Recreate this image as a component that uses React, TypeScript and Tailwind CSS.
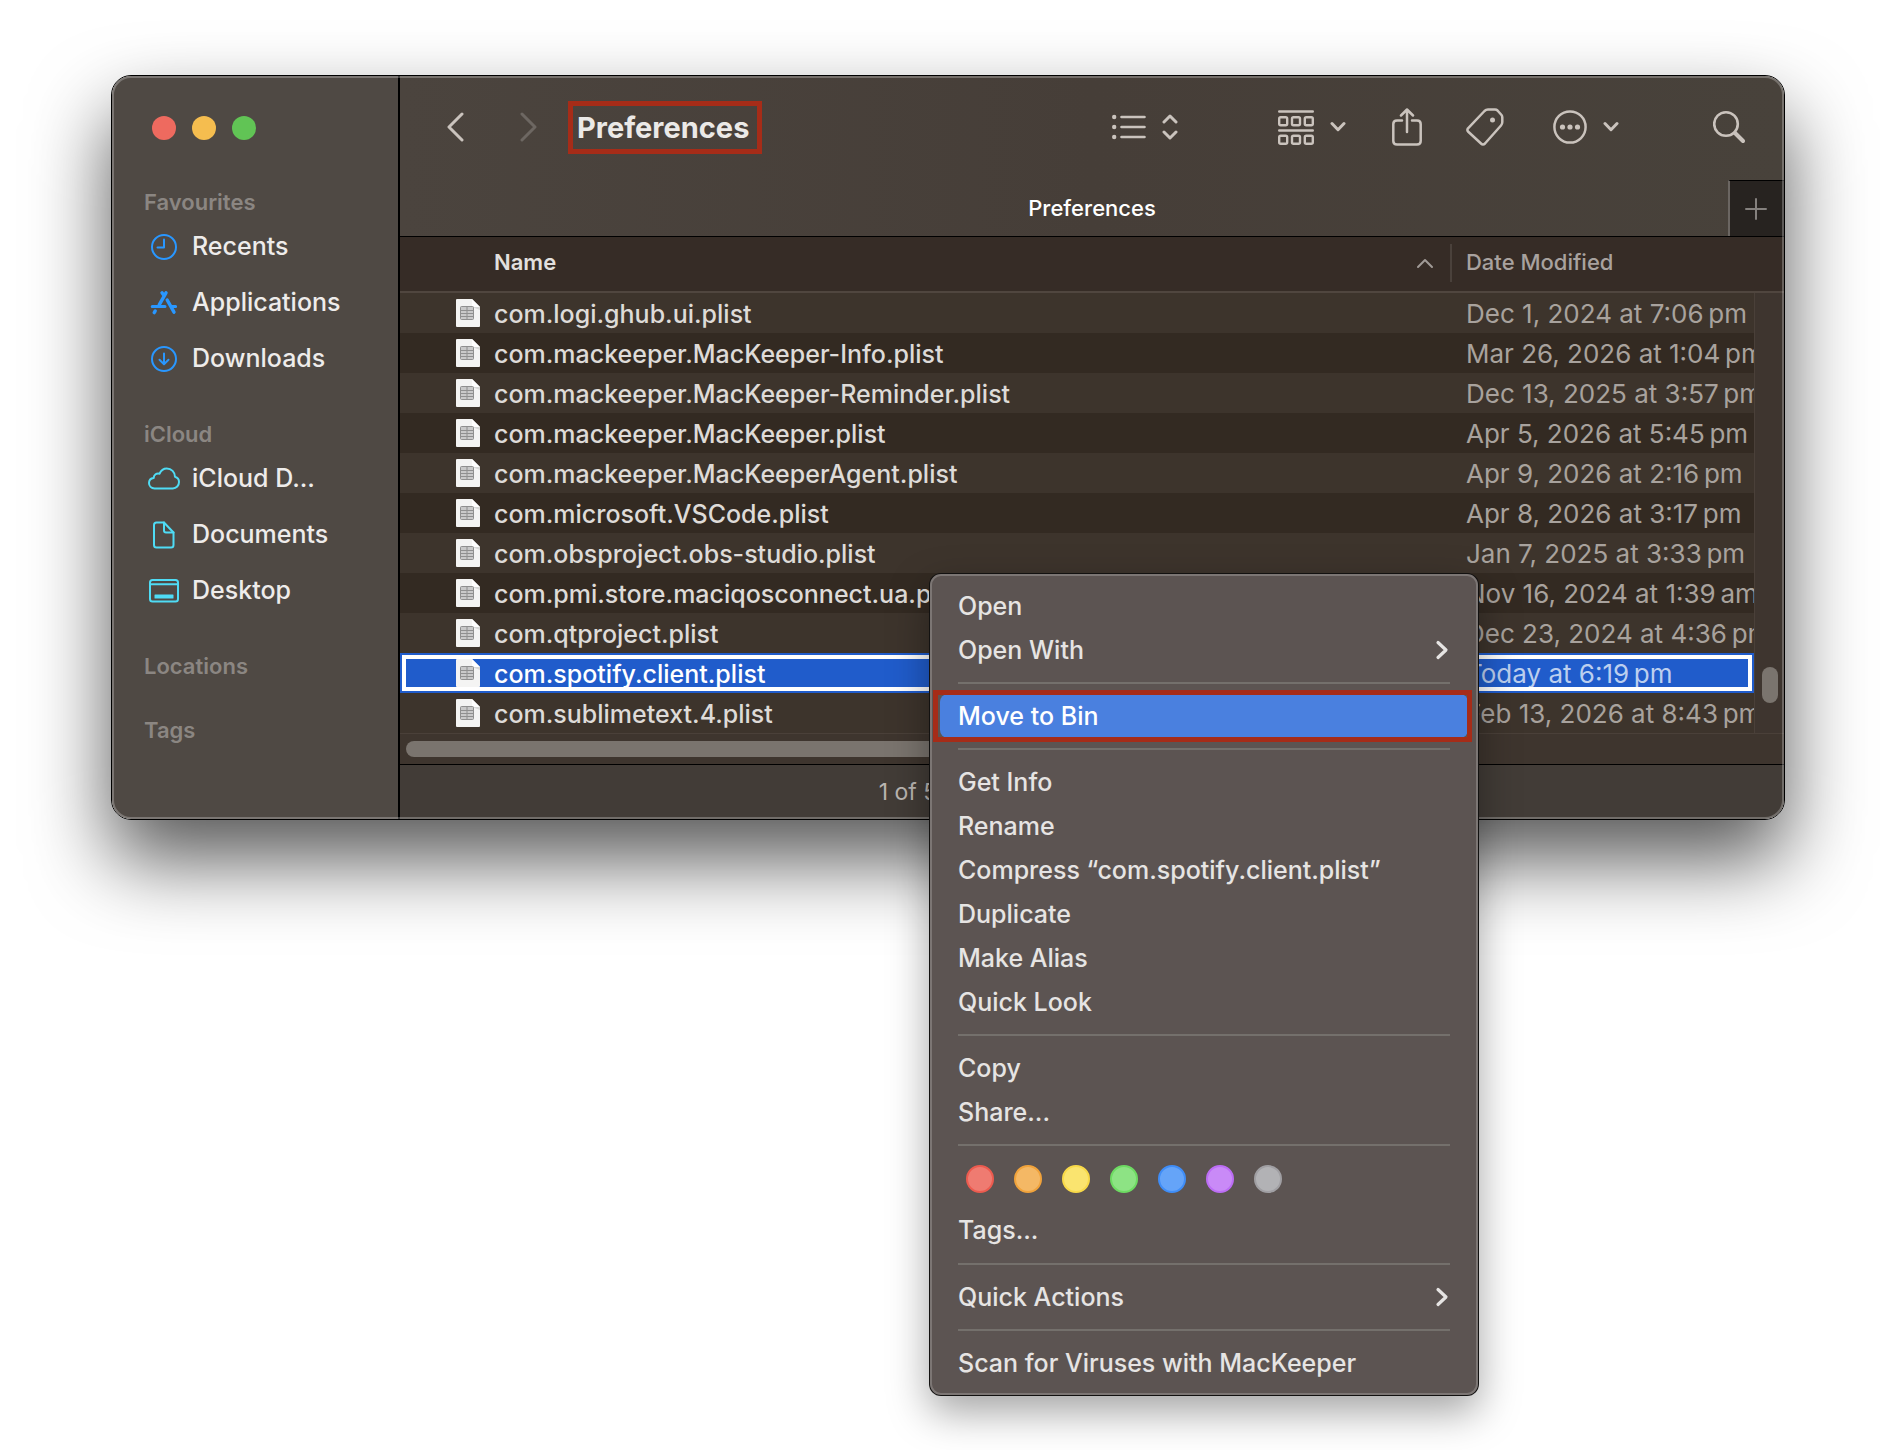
import React from "react";

const files = [
  { name: "com.logi.ghub.ui.plist", date: "Dec 1, 2024 at 7:06\u202fpm" },
  { name: "com.mackeeper.MacKeeper-Info.plist", date: "Mar 26, 2026 at 1:04\u202fpm" },
  { name: "com.mackeeper.MacKeeper-Reminder.plist", date: "Dec 13, 2025 at 3:57\u202fpm" },
  { name: "com.mackeeper.MacKeeper.plist", date: "Apr 5, 2026 at 5:45\u202fpm" },
  { name: "com.mackeeper.MacKeeperAgent.plist", date: "Apr 9, 2026 at 2:16\u202fpm" },
  { name: "com.microsoft.VSCode.plist", date: "Apr 8, 2026 at 3:17\u202fpm" },
  { name: "com.obsproject.obs-studio.plist", date: "Jan 7, 2025 at 3:33\u202fpm" },
  { name: "com.pmi.store.maciqosconnect.ua.plist", date: "Nov 16, 2024 at 1:39\u202fam" },
  { name: "com.qtproject.plist", date: "Dec 23, 2024 at 4:36\u202fpm" },
  { name: "com.spotify.client.plist", date: "Today at 6:19\u202fpm", selected: true },
  { name: "com.sublimetext.4.plist", date: "Feb 13, 2026 at 8:43\u202fpm" },
];

const stroke = {
  fill: "none",
  stroke: "currentColor",
  strokeLinecap: "round",
  strokeLinejoin: "round",
} as const;

function ClockIcon() {
  return (
    <svg width="32" height="32" viewBox="0 0 32 32" {...stroke} strokeWidth="2">
      <circle cx="16" cy="16" r="12" />
      <path d="M16 8.5V16.5H9.5" />
    </svg>
  );
}

function AppsIcon() {
  return (
    <svg width="32" height="32" viewBox="0 0 32 32" {...stroke} strokeWidth="3.4">
      <path d="M18 5.8L11.2 17.8M14 5.8L16 8.6M19.2 13L26 25.2" />
      <path d="M4.2 19.6H17M23.4 19.6H27.6" strokeWidth="3" />
      <path d="M7.2 24L6.2 25.6" />
    </svg>
  );
}

function DownloadIcon() {
  return (
    <svg width="32" height="32" viewBox="0 0 32 32" {...stroke} strokeWidth="2">
      <circle cx="16" cy="16" r="12" />
      <path d="M16 10.5V21M11.5 16.8L16 21.2L20.5 16.8" />
    </svg>
  );
}

function CloudIcon() {
  return (
    <svg width="32" height="32" viewBox="0 0 32 32" {...stroke} strokeWidth="2">
      <path d="M6.6 25.4C3.3 25.4 1 23 1 20.1c0-2.8 2-4.9 4.7-5.2 0-3.2 3-5.2 5.9-4.2C13 7.3 15.6 5.5 18.8 5.5c4.6 0 8.1 3.6 8.2 8.2 2.4 .7 4 2.9 4 5.4 0 3.5-2.6 6.3-6.2 6.3z" />
    </svg>
  );
}

function DocIcon() {
  return (
    <svg width="32" height="32" viewBox="0 0 32 32" {...stroke} strokeWidth="2">
      <path d="M8.5 3.5H16L25.5 13.5V26Q25.5 28.5 23 28.5H8.5Q6 28.5 6 26V6Q6 3.5 8.5 3.5z" />
      <path d="M16 3.5V11.5Q16 13.5 18 13.5H25.5" />
    </svg>
  );
}

function DesktopIcon() {
  return (
    <svg width="32" height="32" viewBox="0 0 32 32" {...stroke} strokeWidth="2">
      <rect x="2" y="5" width="28" height="21.5" rx="2.5" />
      <path d="M2 9.3H30" />
      <rect x="6.5" y="19.5" width="19" height="4" rx="0.5" fill="currentColor" stroke="none" />
    </svg>
  );
}

function PlistIcon() {
  return (
    <svg className="shrink-0" width="24" height="30" viewBox="0 0 24 30">
      <path d="M1 1H16L24 9V28Q24 29 23 29H1Q0 29 0 28V2Q0 1 1 1z" fill="#f4f4f3" />
      <path d="M16 1L24 9H16z" fill="#ffffff" />
      <path d="M16 9H24V12z" fill="#d9d9d8" />
      <rect x="4.5" y="8.5" width="13" height="13" rx="1" fill="#c9c9c9" stroke="#8f8f8f" />
      <path d="M11 8.5V21.5M5 12.5H17M5 15.5H17M5 18.5H17" stroke="#8f8f8f" />
    </svg>
  );
}

function ChevronDown() {
  return (
    <svg width="16" height="12" viewBox="0 0 16 12" {...stroke} strokeWidth="3">
      <path d="M2 2.5L8 8.7L14 2.5" />
    </svg>
  );
}

const places = [
  {
    heading: "Favourites",
    color: "text-[#2997ff]",
    items: [
      { label: "Recents", icon: ClockIcon },
      { label: "Applications", icon: AppsIcon },
      { label: "Downloads", icon: DownloadIcon },
    ],
  },
  {
    heading: "iCloud",
    color: "text-[#4fdcf5]",
    items: [
      { label: "iCloud D...", icon: CloudIcon },
      { label: "Documents", icon: DocIcon },
      { label: "Desktop", icon: DesktopIcon },
    ],
  },
];

function Sidebar() {
  return (
    <nav className="w-[288px] shrink-0 border-r-2 border-black bg-[#4f4944]">
      <div className="flex gap-4 pt-10 pl-10">
        <button aria-label="Close" className="size-6 rounded-full bg-[#ee6a5f]" />
        <button aria-label="Minimise" className="size-6 rounded-full bg-[#f5bd4f]" />
        <button aria-label="Zoom" className="size-6 rounded-full bg-[#61c455]" />
      </div>
      <div className="pt-12 pl-8">
        {places.map(({ heading, color, items }) => (
          <section key={heading} className="mb-[33px]">
            <h2 className="h-7 text-[22px] leading-7 font-semibold text-[#8b8682]">{heading}</h2>
            <ul className="pt-[3px]">
              {items.map(({ label, icon: Icon }) => (
                <li key={label}>
                  <a href="#" className="flex h-14 items-center gap-3 pl-1 text-[25px] font-medium text-[#eeeceb]">
                    <span className={color}>
                      <Icon />
                    </span>
                    {label}
                  </a>
                </li>
              ))}
            </ul>
          </section>
        ))}
        <h2 className="mb-9 h-7 text-[22px] leading-7 font-semibold text-[#8b8682]">Locations</h2>
        <h2 className="h-7 text-[22px] leading-7 font-semibold text-[#8b8682]">Tags</h2>
      </div>
    </nav>
  );
}

function Toolbar() {
  return (
    <header className="flex h-[104px] items-center pr-[39px] pb-0.5 pl-[46px] text-[#cac3bd]">
      <button aria-label="Back" className="mr-14">
        <svg width="18" height="30" viewBox="0 0 18 30" {...stroke} strokeWidth="3">
          <path d="M16 2L3 15L16 28" />
        </svg>
      </button>
      <button aria-label="Forward" className="text-[#6d6762]">
        <svg width="18" height="30" viewBox="0 0 18 30" {...stroke} strokeWidth="3">
          <path d="M2 2L15 15L2 28" />
        </svg>
      </button>
      <h1 className="ml-[30px] border-[5px] border-[#a62c18] py-1 pr-2 pl-1 text-[29px] leading-[35px] font-bold text-[#ebe9e7]">
        Preferences
      </h1>
      <button aria-label="View as list" className="ml-auto flex items-center gap-4">
        <svg width="34" height="28" viewBox="0 0 34 28" {...stroke} strokeWidth="2.6">
          <path d="M9.5 4H32.5M9.5 14H32.5M9.5 24H32.5" />
          <g fill="currentColor" stroke="none">
            <circle cx="2.2" cy="4" r="2.2" />
            <circle cx="2.2" cy="14" r="2.2" />
            <circle cx="2.2" cy="24" r="2.2" />
          </g>
        </svg>
        <svg width="16" height="28" viewBox="0 0 16 28" {...stroke} strokeWidth="3">
          <path d="M2 9L8 3L14 9M2 19L8 25L14 19" />
        </svg>
      </button>
      <button aria-label="Group by" className="ml-[100px] flex items-center gap-4">
        <svg width="36" height="36" viewBox="0 0 36 36" {...stroke} strokeWidth="2.4">
          <path d="M1.2 2.5H34.8M1.2 21.5H34.8" />
          <rect x="1.2" y="8.2" width="8" height="8" rx="1.5" />
          <rect x="14" y="8.2" width="8" height="8" rx="1.5" />
          <rect x="26.8" y="8.2" width="8" height="8" rx="1.5" />
          <rect x="1.2" y="26.8" width="8" height="8" rx="1.5" />
          <rect x="14" y="26.8" width="8" height="8" rx="1.5" />
          <rect x="26.8" y="26.8" width="8" height="8" rx="1.5" />
        </svg>
        <ChevronDown />
      </button>
      <button aria-label="Share" className="ml-[46px]">
        <svg width="30" height="38" viewBox="0 0 30 38" {...stroke} strokeWidth="2.5">
          <path d="M10 12.5H5Q1.3 12.5 1.3 16V33Q1.3 36.5 5 36.5H25Q28.7 36.5 28.7 33V16Q28.7 12.5 25 12.5H20" />
          <path d="M15 24V1.5M9 7.5L15 1.5L21 7.5" />
        </svg>
      </button>
      <button aria-label="Edit tags" className="ml-11">
        <svg width="38" height="38" viewBox="0 0 38 38" {...stroke} strokeWidth="2.5">
          <path d="M22 1.5H29Q30.5 1.5 31.5 2.5L35.5 7Q36.3 8 36.3 9.5V14Q36.3 16 35 17.5L19 35.5Q17 37.5 15 35.5L2 23.5Q.8 22 2 20.3L18.5 3Q20 1.5 22 1.5z" />
          <circle cx="26.5" cy="12" r="2.5" fill="currentColor" stroke="none" />
        </svg>
      </button>
      <button aria-label="More actions" className="ml-[49px] flex items-center gap-4">
        <svg width="34" height="34" viewBox="0 0 34 34" {...stroke} strokeWidth="2.5">
          <circle cx="17" cy="17" r="15.6" />
          <g fill="currentColor" stroke="none">
            <circle cx="9.5" cy="17" r="2.6" />
            <circle cx="17" cy="17" r="2.6" />
            <circle cx="24.5" cy="17" r="2.6" />
          </g>
        </svg>
        <ChevronDown />
      </button>
      <button aria-label="Search" className="ml-[94px]">
        <svg width="32" height="34" viewBox="0 0 32 34" {...stroke} strokeWidth="2.6">
          <circle cx="13" cy="14" r="11.8" />
          <path d="M22 23L30 31" strokeWidth="4" />
        </svg>
      </button>
    </header>
  );
}

function TabBar() {
  return (
    <div className="grid h-[57px] grid-cols-[56px_1fr_56px] border-b border-black">
      <button className="col-start-2 text-[22px] font-medium text-white">Preferences</button>
      <button
        aria-label="New tab"
        className="flex items-center justify-center border-t border-l-2 border-t-black border-l-[#6b6662] bg-[#272320] pr-0.5 text-[#85817e]"
      >
        <svg width="22" height="22" viewBox="0 0 22 22" {...stroke} strokeWidth="2">
          <path d="M11 1V21M1 11H21" />
        </svg>
      </button>
    </div>
  );
}

function FileTable() {
  return (
    <table className="w-full table-fixed border-separate border-spacing-0 text-left">
      <colgroup>
        <col />
        <col className="w-[302px]" />
        <col className="w-[30px]" />
      </colgroup>
      <thead>
        <tr className="bg-[#362c26] text-[22px]">
          <th className="h-14 border-b-2 border-[#50463f] p-0 pb-0.5 pl-[94px] font-semibold text-[#e3e0de]">
            <div className="flex items-center justify-between">
              <span className="pb-0.5">Name</span>
              <span className="flex items-center gap-4 text-[#a09a96]">
                <svg width="18" height="12" viewBox="0 0 18 12" {...stroke} strokeWidth="2">
                  <path d="M2 10L9 3L16 10" />
                </svg>
                <span className="h-[38px] w-0 border-r-2 border-[#4a413b]" />
              </span>
            </div>
          </th>
          <th colSpan={2} className="border-b-2 border-[#50463f] p-0 pb-1 pl-[14px] font-medium text-[#a8a29f]">
            Date Modified
          </th>
        </tr>
      </thead>
      <tbody>
        {files.map(({ name, date, selected }, i) => (
          <tr
            key={name}
            className={
              selected
                ? "bg-[#205ccb] text-white"
                : i % 2
                  ? "bg-[#332a22] text-[#dedbd8]"
                  : "bg-[#3d342c] text-[#dedbd8]"
            }
          >
            <td className="relative h-10 p-0 pl-14 text-[25px] leading-9 font-medium">
              {selected && <div className="absolute inset-y-0.5 right-0 left-0.5 border-4 border-r-0 border-white" />}
              <div className="relative flex items-center gap-[14px] whitespace-nowrap">
                <PlistIcon />
                <span className="pt-0.5">{name}</span>
              </div>
            </td>
            <td
              className={
                selected
                  ? "relative h-10 overflow-hidden p-0 pt-0.5 pl-[14px] text-[26px] leading-9 whitespace-nowrap text-[#bccfef]"
                  : "relative h-10 overflow-hidden p-0 pt-0.5 pl-[14px] text-[26px] leading-9 whitespace-nowrap text-[#a8a29d]"
              }
            >
              {selected && <div className="absolute inset-y-0.5 right-0.5 left-0 border-4 border-l-0 border-white" />}
              {date}
            </td>
            {i === 0 && (
              <td rowSpan={files.length} className="border-l border-[#4a4039] bg-[#3e352f] p-0 pb-[30px] pl-[7px] align-bottom">
                <div className="h-9 w-4 rounded-full bg-[#7a746e]" />
              </td>
            )}
          </tr>
        ))}
      </tbody>
    </table>
  );
}

function FinderWindow() {
  return (
    <main className="relative flex overflow-hidden rounded-[20px] border border-black">
      <Sidebar />
      <section className="flex min-w-0 flex-1 flex-col">
        <div className="bg-linear-to-r from-[#4b443e] via-[#463e38] to-[#48423b]">
          <Toolbar />
          <TabBar />
        </div>
        <FileTable />
        <div className="border-t border-b border-t-[#4a4039] border-b-black bg-[#3e352e] py-[7px] pl-1.5">
          <div className="h-4 w-3/4 rounded-full bg-[#7a746e]" />
        </div>
        <footer className="bg-[#423c37] py-3 text-center text-[23px] leading-[30px] text-[#bab5b1]">
          1 of 583 selected, 1,132.45 GB available
        </footer>
      </section>
      <div className="pointer-events-none absolute inset-0 rounded-[19px] border-2 border-white/25" />
    </main>
  );
}

function Item({ children, submenu, highlighted }: { children: React.ReactNode; submenu?: boolean; highlighted?: boolean }) {
  return (
    <button
      role="menuitem"
      className={
        highlighted
          ? "relative flex h-11 w-full items-center justify-between rounded-lg bg-[#4a80df] px-[18px] text-left text-white"
          : "relative flex h-11 w-full items-center justify-between px-[18px] text-left"
      }
    >
      <span className="pt-0.5">{children}</span>
      {submenu && (
        <svg width="16" height="20" viewBox="0 0 16 20" {...stroke} strokeWidth="3.2">
          <path d="M4 2.5L12 10L4 17.5" />
        </svg>
      )}
      {highlighted && <span className="absolute -inset-y-1 -right-1 -left-[7px] border-[5px] border-[#a62c18]" />}
    </button>
  );
}

function Separator() {
  return <hr className="mx-[18px] my-2.5 border-t-2 border-[#74706c]" />;
}

const tags = [
  { name: "Red", look: "border-[#ec5b4f] bg-[#ef7b71]" },
  { name: "Orange", look: "border-[#f1a33b] bg-[#f4b865]" },
  { name: "Yellow", look: "border-[#f8d948] bg-[#fae46f]" },
  { name: "Green", look: "border-[#6ddb62] bg-[#8de384]" },
  { name: "Blue", look: "border-[#3f8df7] bg-[#65a4f8]" },
  { name: "Purple", look: "border-[#bc6df5] bg-[#c98af7]" },
  { name: "Grey", look: "border-[#a09fa3] bg-[#b2b2b5]" },
];

function ContextMenu() {
  return (
    <div
      role="menu"
      className="absolute top-[498px] left-[818px] w-[550px] rounded-xl border border-black/80 bg-[#5c5452] p-2.5 text-[25px] font-medium text-[#e6e4e3] shadow-[0_16px_40px_rgba(0,0,0,0.36)]"
    >
      <Item>Open</Item>
      <Item submenu>Open With</Item>
      <Separator />
      <Item highlighted>Move to Bin</Item>
      <Separator />
      <Item>Get Info</Item>
      <Item>Rename</Item>
      <Item>Compress “com.spotify.client.plist”</Item>
      <Item>Duplicate</Item>
      <Item>Make Alias</Item>
      <Item>Quick Look</Item>
      <Separator />
      <Item>Copy</Item>
      <Item>Share...</Item>
      <Separator />
      <div className="flex h-[52px] gap-5 pt-[9px] pl-[26px]">
        {tags.map(({ name, look }) => (
          <button key={name} aria-label={name} className={`size-7 rounded-full border-2 ${look}`} />
        ))}
      </div>
      <Item>Tags...</Item>
      <div className="pt-px">
        <Separator />
      </div>
      <Item submenu>Quick Actions</Item>
      <Separator />
      <Item>Scan for Viruses with MacKeeper</Item>
      <div className="pointer-events-none absolute inset-0 rounded-[11px] border-2 border-white/20" />
    </div>
  );
}

export default function App() {
  return (
    <div className="min-h-screen bg-white px-[111px] pt-[75px] font-['Inter',sans-serif]">
      <div className="relative rounded-[20px] shadow-[0_40px_80px_rgba(0,0,0,0.66)]">
        <FinderWindow />
        <ContextMenu />
      </div>
    </div>
  );
}
